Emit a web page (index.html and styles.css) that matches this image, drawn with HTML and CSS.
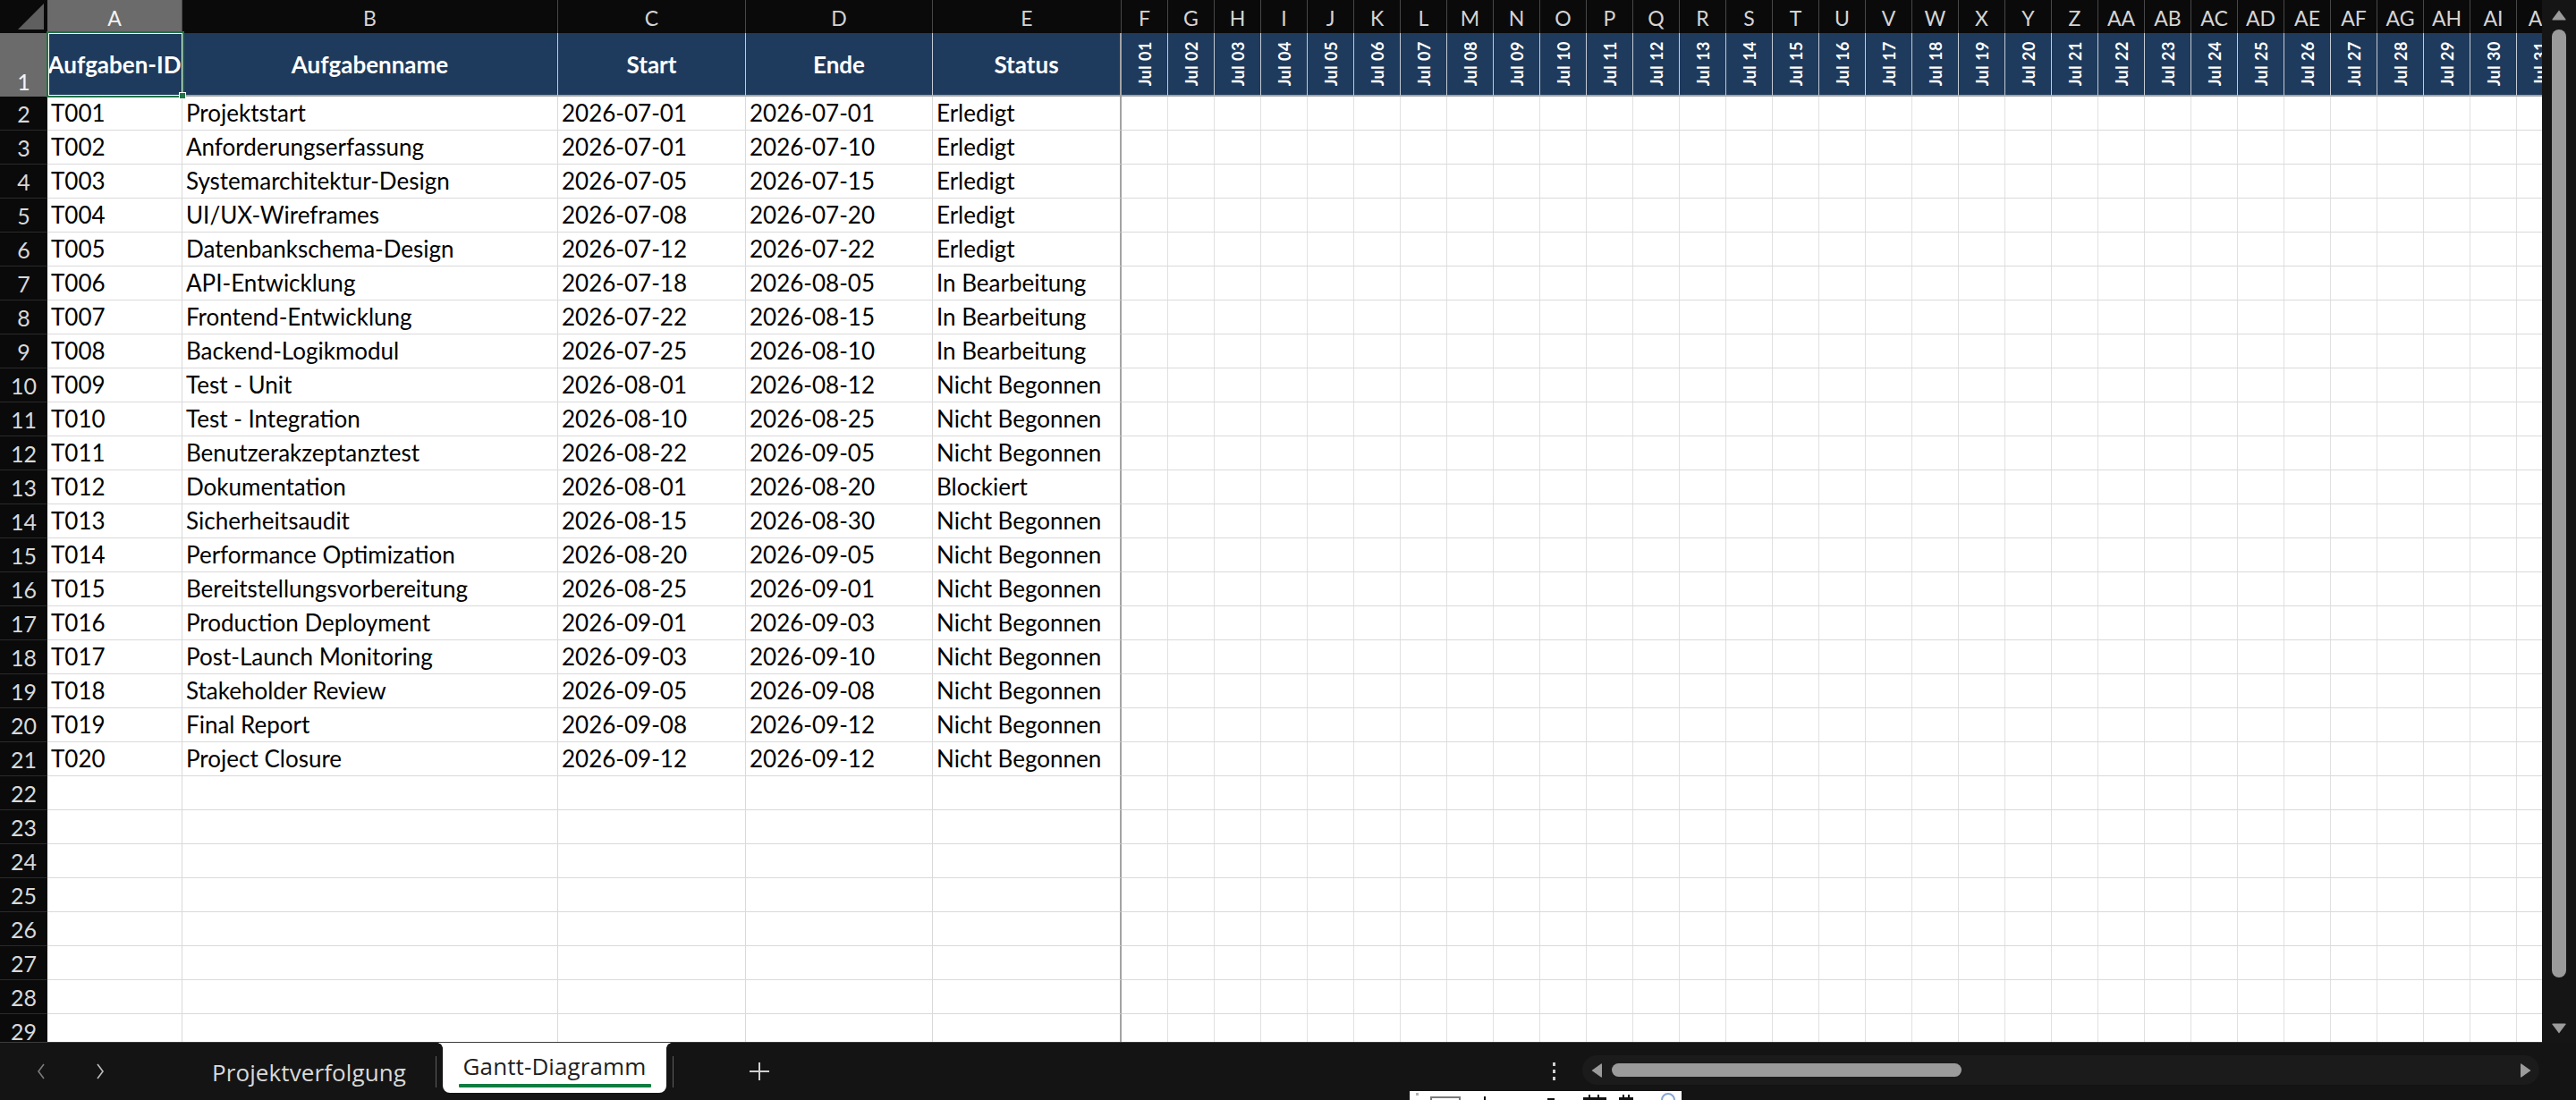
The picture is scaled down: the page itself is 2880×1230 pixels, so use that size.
FILE: index.html
```html
<!DOCTYPE html>
<html lang="de">
<head>
<meta charset="utf-8">
<title>Gantt-Diagramm</title>
<link rel="stylesheet" href="styles.css">
</head>
<body>
<div class="app">
  <div class="main">
    <div class="sheet">
      <div class="row colheads">
        <div class="corner"><svg width="53" height="37" viewBox="0 0 53 37"><polygon points="49,4 49,33 20,33" fill="#5f5f5f"/></svg></div>
        <div class="sel">A</div><div>B</div><div>C</div><div>D</div><div>E</div>
        <div>F</div><div>G</div><div>H</div><div>I</div><div>J</div><div>K</div><div>L</div><div>M</div><div>N</div><div>O</div><div>P</div><div>Q</div><div>R</div><div>S</div><div>T</div><div>U</div><div>V</div><div>W</div><div>X</div><div>Y</div><div>Z</div><div>AA</div><div>AB</div><div>AC</div><div>AD</div><div>AE</div><div>AF</div><div>AG</div><div>AH</div><div>AI</div><div>AJ</div>
      </div>
      <div class="row hrow">
        <div class="rn">1</div>
        <div>Aufgaben-ID</div><div>Aufgabenname</div><div>Start</div><div>Ende</div><div class="e">Status</div>
        <div class="d"><span>Jul 01</span></div><div class="d"><span>Jul 02</span></div><div class="d"><span>Jul 03</span></div><div class="d"><span>Jul 04</span></div><div class="d"><span>Jul 05</span></div><div class="d"><span>Jul 06</span></div><div class="d"><span>Jul 07</span></div><div class="d"><span>Jul 08</span></div><div class="d"><span>Jul 09</span></div><div class="d"><span>Jul 10</span></div><div class="d"><span>Jul 11</span></div><div class="d"><span>Jul 12</span></div><div class="d"><span>Jul 13</span></div><div class="d"><span>Jul 14</span></div><div class="d"><span>Jul 15</span></div><div class="d"><span>Jul 16</span></div><div class="d"><span>Jul 17</span></div><div class="d"><span>Jul 18</span></div><div class="d"><span>Jul 19</span></div><div class="d"><span>Jul 20</span></div><div class="d"><span>Jul 21</span></div><div class="d"><span>Jul 22</span></div><div class="d"><span>Jul 23</span></div><div class="d"><span>Jul 24</span></div><div class="d"><span>Jul 25</span></div><div class="d"><span>Jul 26</span></div><div class="d"><span>Jul 27</span></div><div class="d"><span>Jul 28</span></div><div class="d"><span>Jul 29</span></div><div class="d"><span>Jul 30</span></div><div class="d"><span>Jul 31</span></div>
      </div>
      <div class="row drow"><div class="rn">2</div><div>T001</div><div>Projektstart</div><div>2026-07-01</div><div>2026-07-01</div><div class="e">Erledigt</div><div class="days"></div></div>
      <div class="row drow"><div class="rn">3</div><div>T002</div><div>Anforderungserfassung</div><div>2026-07-01</div><div>2026-07-10</div><div class="e">Erledigt</div><div class="days"></div></div>
      <div class="row drow"><div class="rn">4</div><div>T003</div><div>Systemarchitektur-Design</div><div>2026-07-05</div><div>2026-07-15</div><div class="e">Erledigt</div><div class="days"></div></div>
      <div class="row drow"><div class="rn">5</div><div>T004</div><div>UI/UX-Wireframes</div><div>2026-07-08</div><div>2026-07-20</div><div class="e">Erledigt</div><div class="days"></div></div>
      <div class="row drow"><div class="rn">6</div><div>T005</div><div>Datenbankschema-Design</div><div>2026-07-12</div><div>2026-07-22</div><div class="e">Erledigt</div><div class="days"></div></div>
      <div class="row drow"><div class="rn">7</div><div>T006</div><div>API-Entwicklung</div><div>2026-07-18</div><div>2026-08-05</div><div class="e">In Bearbeitung</div><div class="days"></div></div>
      <div class="row drow"><div class="rn">8</div><div>T007</div><div>Frontend-Entwicklung</div><div>2026-07-22</div><div>2026-08-15</div><div class="e">In Bearbeitung</div><div class="days"></div></div>
      <div class="row drow"><div class="rn">9</div><div>T008</div><div>Backend-Logikmodul</div><div>2026-07-25</div><div>2026-08-10</div><div class="e">In Bearbeitung</div><div class="days"></div></div>
      <div class="row drow"><div class="rn">10</div><div>T009</div><div>Test - Unit</div><div>2026-08-01</div><div>2026-08-12</div><div class="e">Nicht Begonnen</div><div class="days"></div></div>
      <div class="row drow"><div class="rn">11</div><div>T010</div><div>Test - Integration</div><div>2026-08-10</div><div>2026-08-25</div><div class="e">Nicht Begonnen</div><div class="days"></div></div>
      <div class="row drow"><div class="rn">12</div><div>T011</div><div>Benutzerakzeptanztest</div><div>2026-08-22</div><div>2026-09-05</div><div class="e">Nicht Begonnen</div><div class="days"></div></div>
      <div class="row drow"><div class="rn">13</div><div>T012</div><div>Dokumentation</div><div>2026-08-01</div><div>2026-08-20</div><div class="e">Blockiert</div><div class="days"></div></div>
      <div class="row drow"><div class="rn">14</div><div>T013</div><div>Sicherheitsaudit</div><div>2026-08-15</div><div>2026-08-30</div><div class="e">Nicht Begonnen</div><div class="days"></div></div>
      <div class="row drow"><div class="rn">15</div><div>T014</div><div>Performance Optimization</div><div>2026-08-20</div><div>2026-09-05</div><div class="e">Nicht Begonnen</div><div class="days"></div></div>
      <div class="row drow"><div class="rn">16</div><div>T015</div><div>Bereitstellungsvorbereitung</div><div>2026-08-25</div><div>2026-09-01</div><div class="e">Nicht Begonnen</div><div class="days"></div></div>
      <div class="row drow"><div class="rn">17</div><div>T016</div><div>Production Deployment</div><div>2026-09-01</div><div>2026-09-03</div><div class="e">Nicht Begonnen</div><div class="days"></div></div>
      <div class="row drow"><div class="rn">18</div><div>T017</div><div>Post-Launch Monitoring</div><div>2026-09-03</div><div>2026-09-10</div><div class="e">Nicht Begonnen</div><div class="days"></div></div>
      <div class="row drow"><div class="rn">19</div><div>T018</div><div>Stakeholder Review</div><div>2026-09-05</div><div>2026-09-08</div><div class="e">Nicht Begonnen</div><div class="days"></div></div>
      <div class="row drow"><div class="rn">20</div><div>T019</div><div>Final Report</div><div>2026-09-08</div><div>2026-09-12</div><div class="e">Nicht Begonnen</div><div class="days"></div></div>
      <div class="row drow"><div class="rn">21</div><div>T020</div><div>Project Closure</div><div>2026-09-12</div><div>2026-09-12</div><div class="e">Nicht Begonnen</div><div class="days"></div></div>
      <div class="row drow"><div class="rn">22</div><div></div><div></div><div></div><div></div><div class="e"></div><div class="days"></div></div>
      <div class="row drow"><div class="rn">23</div><div></div><div></div><div></div><div></div><div class="e"></div><div class="days"></div></div>
      <div class="row drow"><div class="rn">24</div><div></div><div></div><div></div><div></div><div class="e"></div><div class="days"></div></div>
      <div class="row drow"><div class="rn">25</div><div></div><div></div><div></div><div></div><div class="e"></div><div class="days"></div></div>
      <div class="row drow"><div class="rn">26</div><div></div><div></div><div></div><div></div><div class="e"></div><div class="days"></div></div>
      <div class="row drow"><div class="rn">27</div><div></div><div></div><div></div><div></div><div class="e"></div><div class="days"></div></div>
      <div class="row drow"><div class="rn">28</div><div></div><div></div><div></div><div></div><div class="e"></div><div class="days"></div></div>
      <div class="row drow"><div class="rn">29</div><div></div><div></div><div></div><div></div><div class="e"></div><div class="days"></div></div>
      <div class="selection"><span class="handle"></span></div>
    </div>
    <div class="vscroll">
      <svg class="varrow" width="18" height="13" viewBox="0 0 18 13"><path d="M9 1.5 L16.5 11.5 Q17 12.5 15.8 12.5 L2.2 12.5 Q1 12.5 1.5 11.5 Z" fill="#9b9b9b"/></svg>
      <div class="vthumb"></div>
      <svg class="varrow down" width="18" height="13" viewBox="0 0 18 13"><path d="M9 11.5 L16.5 1.5 Q17 0.5 15.8 0.5 L2.2 0.5 Q1 0.5 1.5 1.5 Z" fill="#9b9b9b"/></svg>
    </div>
  </div>
  <div class="tabbar">
    <svg class="nav first" width="10" height="18" viewBox="0 0 10 18"><polyline points="8,1 2,9 8,17" fill="none" stroke="#7c7c7c" stroke-width="1.6"/></svg>
    <svg class="nav" width="10" height="18" viewBox="0 0 10 18"><polyline points="2,1 8,9 2,17" fill="none" stroke="#bdbdbd" stroke-width="1.6"/></svg>
    <div class="tab inactive">Projektverfolgung</div>
    <span class="sep"></span>
    <div class="tab active"><span class="label">Gantt-Diagramm</span><span class="underline"></span></div>
    <span class="sep"></span>
    <svg class="plus" width="24" height="22" viewBox="0 0 24 22"><path d="M12 1 V21 M1 11 H23" stroke="#cfcfcf" stroke-width="2"/></svg>
    <div class="dots"><i></i><i></i><i></i></div>
    <div class="hscroll">
      <svg width="14" height="18" viewBox="0 0 14 18"><path d="M1.5 9 L12 1.5 Q13 1 13 2.2 L13 15.8 Q13 17 12 16.5 Z" fill="#9b9b9b"/></svg>
      <div class="hthumb"></div>
      <svg class="right" width="14" height="18" viewBox="0 0 14 18"><path d="M12.5 9 L2 1.5 Q1 1 1 2.2 L1 15.8 Q1 17 2 16.5 Z" fill="#9b9b9b"/></svg>
    </div>
    <div class="popup">
      <svg width="304" height="10" viewBox="0 0 304 10">
        <rect x="7" y="2" width="3" height="3" fill="#b5b5b5"/>
        <path d="M24 10 V7 H56 V10" fill="none" stroke="#7a7a7a" stroke-width="2"/>
        <rect x="83" y="6" width="2" height="4" fill="#111"/>
        <rect x="154" y="8" width="8" height="2" fill="#111"/>
        <path d="M194 10 V7 H200 V4 H202 V7 H210 V4 H212 V7 H220 V10" fill="#111"/>
        <path d="M234 10 V7 H238 V4 H240 V7 H244 V4 H246 V7 H250 V10" fill="#111"/>
        <path d="M282 10 A7 7 0 0 1 296 10" fill="none" stroke="#8aa6d6" stroke-width="2"/>
      </svg>
    </div>
  </div>
</div>
</body>
</html>
```

FILE: styles.css
```css
* { box-sizing: border-box; }

html, body {
  margin: 0;
  padding: 0;
  background: #141414;
}

body {
  font-family: Lato, "Liberation Sans", sans-serif;
}

.app {
  width: 2880px;
  height: 1230px;
  display: flex;
  flex-direction: column;
  overflow: hidden;
}

.main {
  display: flex;
  height: 1166px;
}

.sheet {
  position: relative;
  width: 2842px;
  height: 1166px;
  overflow: hidden;
  background: #ffffff;
  border-bottom: 1px solid #3c3c3c;
}

.row {
  display: grid;
  grid-template-columns: 53px 151px 420px 210px 209px 211px repeat(31, 52px);
}

/* column letters */
.colheads {
  height: 37px;
  background: #0a0a0a;
}

.colheads > div {
  display: flex;
  align-items: center;
  justify-content: center;
  padding-top: 3px;
  color: #d4d4d4;
  font-size: 23px;
  line-height: 28px;
  border-right: 1px solid #474747;
  border-bottom: 1px solid #8d8d8d;
  white-space: nowrap;
}

.colheads > .corner {
  padding: 0;
  border-right: none;
}

.colheads > .corner svg {
  display: block;
}

.colheads > .sel {
  background: #6b6b6b;
  color: #f2f2f2;
}

/* header row */
.hrow {
  height: 71px;
}

.hrow > div {
  display: flex;
  align-items: center;
  justify-content: center;
  background: #1e3a5c;
  color: #ffffff;
  font-weight: 700;
  font-size: 26px;
  white-space: nowrap;
  border-right: 1px solid #c3cad3;
  border-bottom: 2px solid #a3a3a3;
}

.hrow > .rn {
  background: #6b6b6b;
  color: #f2f2f2;
  font-weight: 400;
  font-size: 25px;
  line-height: 30px;
  align-items: flex-end;
  padding-bottom: 2px;
  border-right: none;
  border-bottom: none;
}

.hrow > .e {
  border-right: 2px solid #a3a3a3;
}

.hrow > .d span {
  writing-mode: vertical-rl;
  transform: rotate(180deg);
  font-size: 18px;
  line-height: 18px;
  letter-spacing: 0.5px;
}

/* data rows */
.drow {
  height: 38px;
}

.drow > div {
  display: flex;
  align-items: flex-end;
  padding: 0 0 4px 4px;
  font-size: 26px;
  line-height: 30px;
  color: #000000;
  white-space: nowrap;
  border-right: 1px solid #dadada;
  border-bottom: 1px solid #dadada;
}

.drow > .rn {
  justify-content: center;
  padding-left: 0;
  padding-bottom: 3px;
  background: #0a0a0a;
  color: #d8d8d8;
  font-size: 25px;
  border-right: none;
  border-bottom: 1px solid #2a2a2a;
}

.drow > .e {
  border-right: 2px solid #a3a3a3;
}

.drow > .days {
  grid-column: 7 / -1;
  padding: 0;
  background: repeating-linear-gradient(to right, #ffffff 0 51px, #e1e1e1 51px 52px);
}

/* selected cell A1 */
.selection {
  position: absolute;
  left: 52px;
  top: 35px;
  width: 154px;
  height: 74px;
  border: 2px solid #217346;
  box-shadow: inset 0 0 0 1px #ffffff;
}

.selection .handle {
  position: absolute;
  right: -4px;
  bottom: -4px;
  width: 8px;
  height: 8px;
  background: #217346;
  border: 1px solid #ffffff;
}

/* vertical scrollbar */
.vscroll {
  width: 38px;
  height: 1166px;
  background: #151515;
  display: flex;
  flex-direction: column;
  align-items: center;
  padding-top: 10px;
}

.varrow {
  display: block;
}

.vthumb {
  width: 16px;
  height: 1060px;
  margin-top: 10px;
  border-radius: 8px;
  background: #9b9b9b;
}

.varrow.down {
  margin-top: 51px;
}

/* sheet tabs */
.tabbar {
  position: relative;
  height: 64px;
  display: flex;
  align-items: center;
  background: #141414;
}

.nav {
  display: block;
  margin-left: 56px;
}

.nav.first {
  margin-left: 41px;
}

.tab {
  font-family: "Open Sans", Lato, sans-serif;
  font-size: 26px;
  line-height: 30px;
  letter-spacing: 0.1px;
  white-space: nowrap;
}

.tab.inactive {
  width: 250px;
  margin-left: 120px;
  margin-top: 2px;
  color: #d9d9d9;
}

.sep {
  width: 1px;
  height: 35px;
  background: #5e5e5e;
}

.tab.active {
  position: relative;
  align-self: flex-start;
  width: 250px;
  height: 56px;
  margin: 0 7px;
  padding-top: 11px;
  display: flex;
  flex-direction: column;
  align-items: center;
  background: #ffffff;
  color: #1f1f1f;
  border-radius: 0 0 8px 8px;
}

.tab.active::before,
.tab.active::after {
  content: "";
  position: absolute;
  top: 0;
  width: 6px;
  height: 6px;
}

.tab.active::before {
  left: -6px;
  background: radial-gradient(circle at 0 100%, #141414 5.5px, #ffffff 6px);
}

.tab.active::after {
  right: -6px;
  background: radial-gradient(circle at 100% 100%, #141414 5.5px, #ffffff 6px);
}

.tab.active .label {
  display: block;
}

.tab.active .underline {
  display: block;
  width: 215px;
  height: 4px;
  margin-top: 5px;
  background: #107c41;
  border-radius: 1px;
}

.plus {
  display: block;
  margin-left: 84px;
}

.dots {
  display: flex;
  flex-direction: column;
  gap: 4px;
  margin-left: 875px;
}

.dots i {
  display: block;
  width: 3px;
  height: 4px;
  background: #cfcfcf;
}

.hscroll {
  width: 1070px;
  height: 33px;
  margin-left: 30px;
  margin-top: -3px;
  display: flex;
  align-items: center;
  padding: 0 8px 0 9px;
  border-radius: 17px;
  background: #1b1b1b;
}

.hscroll svg {
  display: block;
}

.hthumb {
  width: 391px;
  height: 15px;
  margin-left: 10px;
  border-radius: 8px;
  background: #9b9b9b;
}

.hscroll .right {
  margin-left: auto;
}

.popup {
  position: absolute;
  left: 1576px;
  top: 54px;
  width: 304px;
  height: 10px;
  background: #ffffff;
  overflow: hidden;
}

.popup svg {
  display: block;
}
```
